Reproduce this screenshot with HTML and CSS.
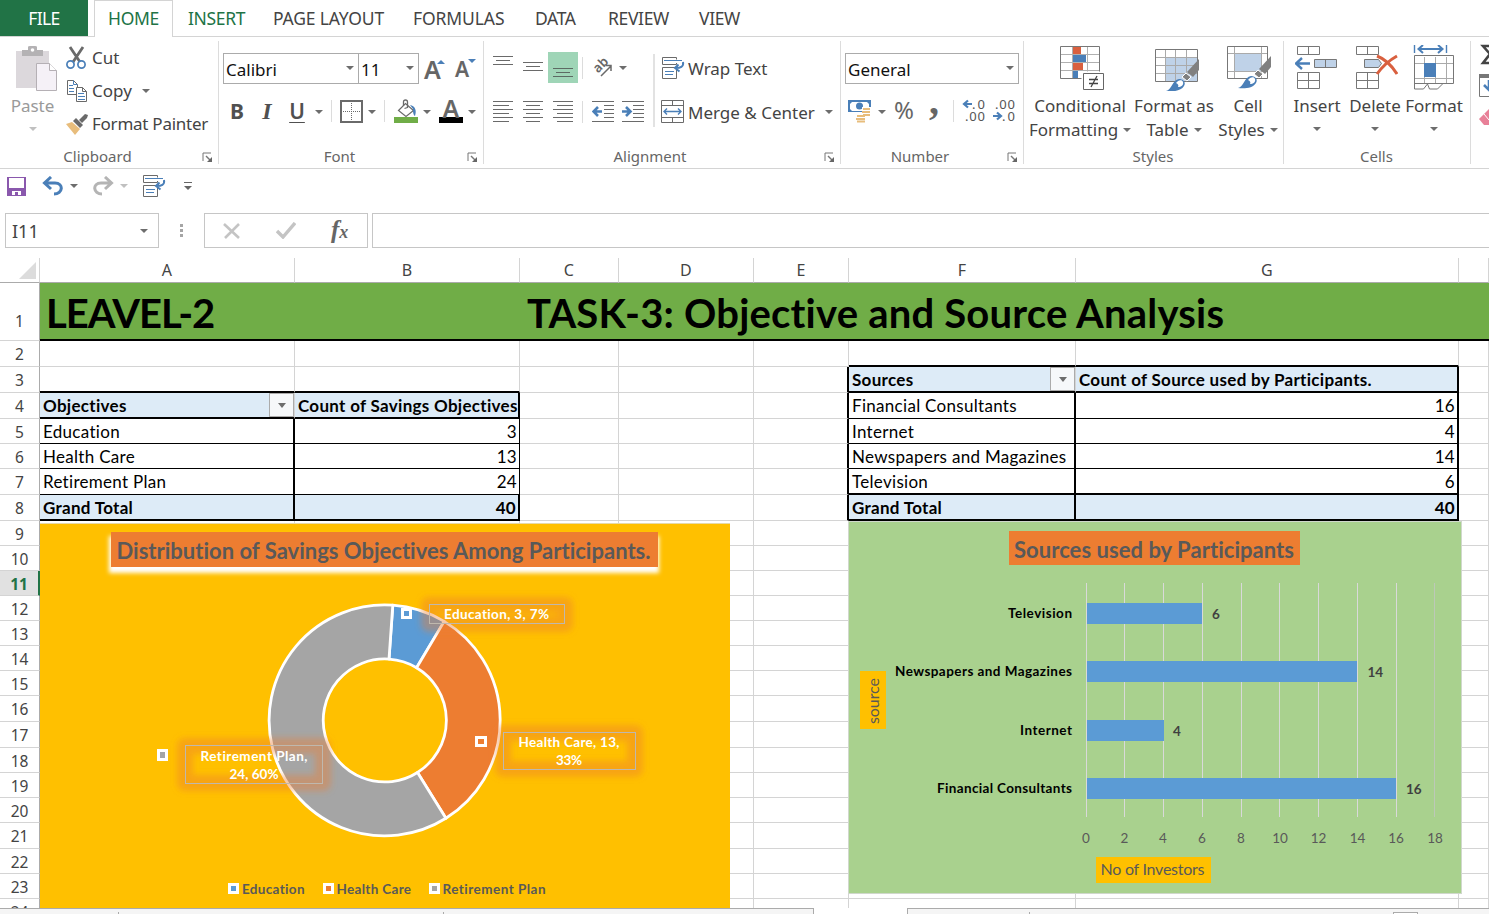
FILE: index.html
```html
<!DOCTYPE html>
<html lang="en">
<head>
<meta charset="utf-8">
<title>Objective and Source Analysis</title>
<link rel="stylesheet" href="styles.css">
</head>
<body>
<svg class="defs" width="0" height="0">
  <defs>
    <symbol id="launch" viewBox="0 0 11 11"><path d="M1 9V1h8" fill="none" stroke="#777"/><path d="M4 4l4 4" stroke="#777" stroke-width="1.4"/><path d="M10 5v5H5z" fill="#666"/></symbol>
    <symbol id="wrap" viewBox="0 0 24 24"><path d="M1.500 8.500v-7h14v2M15.500 7v1.500h-14M1.500 11.500h14v11h-14z" fill="none" stroke="#6a6a6a"/><path d="M3 4.500h18M4 15.500h9M4 18.500h8" stroke="#4a7fb8"/><path d="M22 6c1 5-3 6-7 6M17.500 8.500L14 12l4.500 3.500" fill="none" stroke="#4a7fb8" stroke-width="2"/></symbol>
    <symbol id="brush" viewBox="0 0 34 34"><path d="M33 1v11l-6 7-6-5z" fill="#808080"/><path d="M20 15l5 4-4 4-5-4z" fill="#808080" stroke="#fff"/><path d="M0 33c6-1 6-11 13-12 5 0 7 4 5 7-3 5-11 6-18 5z" fill="#4a7fb8"/><path d="M10 25c2-3 6-4 7-1s-2 5-5 5c1-2 0-3-2-4z" fill="#fff"/></symbol>
  </defs>
</svg>
<nav class="tabs">
  <span class="tab file">FILE</span><span class="tab home">HOME</span><span class="tab insert">INSERT</span><span class="tab layout">PAGE LAYOUT</span><span class="tab formulas">FORMULAS</span><span class="tab data">DATA</span><span class="tab review">REVIEW</span><span class="tab view">VIEW</span>
</nav>
<section class="ribbon">
  <div class="group clipboard">
    <div class="body">
      <div class="big paste">
        <svg width="42" height="46" viewBox="0 0 42 46"><path d="M0 5h33v37H0z" fill="#dcd8dc"/><path d="M6 10V4h6V1q0-1 2-1h5q2 0 2 1v3h6v6z" fill="#b4b2b4"/><circle cx="16.500" cy="4" r="1.800" fill="#fff"/><path d="M20.500 17.500h13l7 7v20h-20z" fill="#f5f1f7" stroke="#b5b0b5"/><path d="M33.500 17.500v7h7" fill="#fff" stroke="#b5b0b5"/></svg>
        <span>Paste</span><i class="arrow light"></i>
      </div>
      <div class="stack">
        <div class="cmd"><svg width="22" height="24" viewBox="0 0 22 24"><path d="M4 1l10 15M17 1L7 16" stroke="#6a6a6a" stroke-width="2.800"/><circle cx="4.500" cy="18.500" r="3.600" fill="#fff" stroke="#4a7fb8" stroke-width="1.700"/><circle cx="15.500" cy="18.500" r="3.600" fill="#fff" stroke="#4a7fb8" stroke-width="1.700"/></svg><span class="t-cut">Cut</span></div>
        <div class="cmd"><svg width="22" height="24" viewBox="0 0 22 24"><path d="M1.500 1.500h6l4 4v10h-10z" fill="#fff" stroke="#6a6a6a"/><path d="M7.500 1.500v4h4M3 6.500h4M3 9.500h5M3 12.500h5" fill="none" stroke="#4a7fb8"/><path d="M10.500 8.500h6l4 4v10h-10z" fill="#fff" stroke="#6a6a6a"/><path d="M16.500 8.500v4h4" fill="none" stroke="#6a6a6a"/><path d="M12 14.500h6M12 17.500h7M12 20.500h7" stroke="#4a7fb8"/></svg><span class="t-copy">Copy</span><i class="arrow"></i></div>
        <div class="cmd"><svg width="22" height="24" viewBox="0 0 22 24"><path d="M0 12l6-2 8 7-5 6z" fill="#e8bd7c"/><path d="M7 9l3-3 7 7-3 3z" fill="#6a6a6a"/><path d="M13 8l6-6 3 1-1 3-5 5z" fill="#6a6a6a"/></svg><span class="t-painter">Format Painter</span></div>
      </div>
    </div>
    <div class="caption"><span>Clipboard</span><svg width="11" height="11"><use href="#launch"/></svg></div>
  </div>
  <div class="group font">
    <div class="body rows">
      <div class="line">
        <div class="combo c-font"><span>Calibri</span><i class="arrow"></i></div><div class="combo c-size"><span>11</span><i class="arrow"></i></div>
        <span class="grow">A<svg width="8" height="5"><path d="M0 5l4-4 4 4z" fill="#4a7fb8"/></svg></span><span class="shrink">A<svg width="8" height="5"><path d="M0 0h8L4 4z" fill="#4a7fb8"/></svg></span>
      </div>
      <div class="line tools">
        <span class="w30 bold">B</span><span class="w30 italic">I</span><span class="w30 under">U</span><i class="arrow"></i><i class="sep"></i>
        <svg class="ic-border" width="23" height="23"><path d="M1 1h21v21H1z" fill="none" stroke="#6a6a6a" stroke-width="2"/><path d="M11.500 3v18M3 11.500h18" stroke="#6a6a6a" stroke-dasharray="1 1"/></svg><i class="arrow a2"></i><i class="sep"></i>
        <svg class="ic-fill" width="24" height="25" viewBox="0 0 24 25"><path d="M4.500 11.500l7-7 8 7-7.500 6z" fill="#fff" stroke="#6a6a6a" stroke-width="1.200"/><path d="M9.500 7V3q0-2 2-2t2 2v6M10.500 9.500l3-1" fill="none" stroke="#6a6a6a" stroke-width="1.300"/><path d="M16 6c5 1 7 5 5 11-2-1-2-5-2-7z" fill="#4a7fb8"/><path d="M0 18h24v6H0z" fill="#70ad47"/></svg><i class="arrow a2"></i>
        <span class="fontcolor">A</span><i class="arrow a2"></i>
      </div>
    </div>
    <div class="caption"><span>Font</span><svg width="11" height="11"><use href="#launch"/></svg></div>
  </div>
  <div class="group align">
    <div class="body">
      <div class="alignicons">
        <div class="line">
          <span class="btn"><svg width="30" height="31"><path d="M5 4.500h20M8 8.500h14M5 12.500h20" stroke="#6a6a6a"/></svg></span><span class="btn"><svg width="30" height="31"><path d="M5 10.500h20M8 14.500h14M5 18.500h20" stroke="#6a6a6a"/></svg></span><span class="btn on"><svg width="30" height="31"><path d="M5 16.500h20M8 20.500h14M5 24.500h20" stroke="#5d6a63"/></svg></span><i class="sep"></i>
          <svg class="ic-orient" width="22" height="22" viewBox="0 0 22 22"><text transform="translate(5 16.500) rotate(-45)" class="abtext">ab</text><path d="M8 19L18 9M12.500 8.500h5.500v5.500" fill="none" stroke="#6a6a6a" stroke-width="1.500"/></svg><i class="arrow a3"></i>
        </div>
        <div class="line second">
          <span class="btn"><svg width="30" height="24"><path d="M5 1.500h20M5 5.500h16M5 9.500h20M5 13.500h16M5 17.500h20M5 21.500h16" stroke="#6a6a6a"/></svg></span><span class="btn"><svg width="30" height="24"><path d="M5 1.500h20M8 5.500h14M5 9.500h20M8 13.500h14M5 17.500h20M8 21.500h14" stroke="#6a6a6a"/></svg></span><span class="btn"><svg width="30" height="24"><path d="M5 1.500h20M9 5.500h16M5 9.500h20M9 13.500h16M5 17.500h20M9 21.500h16" stroke="#6a6a6a"/></svg></span><i class="sep"></i>
          <svg class="ic-indent" width="22" height="24"><path d="M0 1.500h22M12 5.500h10M12 9.500h10M12 13.500h10M12 17.500h10M0 21.500h22" stroke="#6a6a6a"/><path d="M10 11.500H3M6 7l-4.500 4.500L6 16" fill="none" stroke="#4a7fb8" stroke-width="2.600"/></svg><svg class="ic-outdent" width="22" height="24"><path d="M0 1.500h22M11 5.500h11M11 9.500h11M11 13.500h11M11 17.500h11M0 21.500h22" stroke="#6a6a6a"/><path d="M0 11.500h7M4 7l4.500 4.500L4 16" fill="none" stroke="#4a7fb8" stroke-width="2.600"/></svg>
        </div>
      </div>
      <div class="alignwords">
        <div class="cmd"><svg width="24" height="24"><use href="#wrap"/></svg><span class="t-wrap">Wrap Text</span></div>
        <div class="cmd"><svg width="24" height="24"><path d="M.5 .5h22v22H.5zM.5 5.500h22M.5 17.500h22M11.500 .5v5M11.500 17.500v5" fill="none" stroke="#6a6a6a"/><path d="M3 11.500h17M6 8.500l-3 3 3 3M17 8.500l3 3-3 3" fill="none" stroke="#4a7fb8" stroke-width="1.400"/></svg><span class="t-merge">Merge &amp; Center</span><i class="arrow"></i></div>
      </div>
    </div>
    <div class="caption"><span>Alignment</span><svg width="11" height="11"><use href="#launch"/></svg></div>
  </div>
  <div class="group number">
    <div class="body rows">
      <div class="line"><div class="combo c-num"><span>General</span><i class="arrow"></i></div></div>
      <div class="line tools">
        <svg class="ic-money" width="24" height="24"><path d="M0 1h23v12H0z" fill="#4a7fb8"/><path d="M4 3h15l2 2v5l-2 2H4l-2-2V5z" fill="#fff"/><circle cx="11.500" cy="7" r="3.500" fill="#4a7fb8"/><path d="M14 8h10v11h-6v5H7v-9h7z" fill="#fff"/><path d="M15 10h7M14 13h8M15 16h7M9 17h8M8 20h9M9 22.500h8" stroke="#e8bd7c" stroke-width="2"/></svg><i class="arrow a2"></i>
        <span class="percent">%</span><span class="comma">,</span><i class="sep"></i>
        <svg class="ic-dec" width="54" height="26" viewBox="0 0 54 26"><path d="M10 6H3M6 2.500L2 6l4 3.500M31 18h7M35 14.500l4 3.500-4 3.500" fill="none" stroke="#4a7fb8" stroke-width="2.200"/><text class="dec" x="10" y="10.500" textLength="13">.0</text><text class="dec" x="3" y="22.500" textLength="20">.00</text><text class="dec" x="33" y="10.500" textLength="20">.00</text><text class="dec" x="40" y="22.500" textLength="13">.0</text></svg>
      </div>
    </div>
    <div class="caption"><span>Number</span><svg width="11" height="11"><use href="#launch"/></svg></div>
  </div>
  <div class="group styles">
    <div class="body">
      <div class="big"><svg class="i1" width="45" height="46"><path d="M.5 1.500h39v32H.5z" fill="#fff" stroke="#777"/><path d="M1 9.500h38M1 17.500h38M1 25.500h38M12.500 2v31M27.500 2v31" stroke="#b0b0b0"/><path d="M13 2h8v7h-8zM13 18h10v7H13z" fill="#d9603f"/><path d="M13 10h13v7H13zM13 26h5v7h-5z" fill="#4a7fb8"/><path d="M21.500 26.500h23v19h-23z" fill="#fff"/><path d="M23.500 28.500h20v16h-20z" fill="#fff" stroke="#666"/><path d="M29 34.500h9M29 38.500h9M37 31l-6 11" stroke="#444" stroke-width="1.300"/></svg><span class="t-cond">Conditional</span><span class="t-fmting">Formatting<i class="arrow"></i></span></div>
      <div class="big"><svg class="i2" width="46" height="46"><path d="M1.500 4.500h42v32h-42z" fill="#fff"/><path d="M12 13h31v24H12z" fill="#bfd2e8"/><path d="M2 12.500h41M2 20.500h41M2 28.500h41M11.500 5v31M21.500 5v31M32.500 5v31" stroke="#aaa"/><path d="M1.500 4.500h42v32h-42z" fill="none" stroke="#777"/><use href="#brush" x="12" y="13" width="34" height="34"/></svg><span class="t-fmtas">Format as</span><span class="t-table">Table<i class="arrow"></i></span></div>
      <div class="big"><svg class="i3" width="44" height="46"><path d="M.5 1.500h40v32H.5z" fill="#fff"/><path d="M8 9h26v18H8z" fill="#bfd2e8"/><path d="M1 8.500h39M1 26.500h39M7.500 2v31M34.500 2v31" stroke="#aaa"/><path d="M.5 1.500h40v32H.5z" fill="none" stroke="#777"/><use href="#brush" x="11" y="10" width="34" height="34"/></svg><span class="t-cell">Cell</span><span class="t-styles">Styles<i class="arrow"></i></span></div>
    </div>
    <div class="caption"><span>Styles</span></div>
  </div>
  <div class="group cells">
    <div class="body">
      <div class="big"><svg width="44" height="46"><path d="M2.500 1.500h22v8h-22zM13.500 1.500v8M2.500 27.500h22v16h-22zM2.500 35.500h22M13.500 27.500v16" fill="none" stroke="#777"/><path d="M19.500 14.500h22v8h-22z" fill="#bfd2e8" stroke="#777"/><path d="M30.500 14.500v8" stroke="#777"/><path d="M15 18.500H1M7 13l-6 5.500L7 24" fill="none" stroke="#4a7fb8" stroke-width="2.400"/></svg><span class="t-ins">Insert</span><i class="arrow"></i></div>
      <div class="big"><svg width="46" height="46"><path d="M4.500 1.500h22v8h-22zM15.500 1.500v8M4.500 27.500h22v16h-22zM4.500 35.500h22M15.500 27.500v16" fill="none" stroke="#777"/><path d="M12.500 14.500h14l3 4-3 4h-14z" fill="#bfd2e8" stroke="#777"/><path d="M25 11c8 3 15 10 20 18M45 11c-9 5-15 11-20 18" fill="none" stroke="#d9603f" stroke-width="3"/></svg><span class="t-del">Delete</span><i class="arrow"></i></div>
      <div class="big"><svg width="42" height="46"><path d="M1.500 11.500h39v28h-39z" fill="#fff"/><path d="M2 18.500h38M2 33.500h38M11.500 12v27M22.500 12v27M33.500 12v27" stroke="#aaa"/><path d="M1.500 10.500h39v28h-39zM1.500 38v6h9l4-5 2 5h8l5-5" fill="none" stroke="#777"/><path d="M11 18h12v14H11z" fill="#4a7fb8"/><path d="M1.500 0v8M33.500 0v8" stroke="#4a7fb8" stroke-width="1.400"/><path d="M6 4h23M10 0L5.500 4l4.500 4M25 0l4.500 4L25 8" fill="none" stroke="#4a7fb8" stroke-width="2"/></svg><span class="t-fmt">Format</span><i class="arrow"></i></div>
    </div>
    <div class="caption"><span>Cells</span></div>
  </div>
  <div class="group editing">
    <svg width="18" height="100"><path d="M24 9H12l7 8-7 9h12" fill="none" stroke="#444" stroke-width="2.600"/><path d="M8.500 38.500h15v21h-15z" fill="#fff" stroke="#777"/><path d="M8 37h16v4H8z" fill="#777"/><path d="M18 43v10M13 48l6 6" stroke="#4a7fb8" stroke-width="2.600"/><path d="M8 82l10-10v16h-5z" fill="#e88098"/><path d="M13 77l5 6" stroke="#fff"/></svg>
  </div>
</section>
<div class="quick">
  <svg width="19" height="19"><path d="M0 0h19v19H0z" fill="#8a58ad"/><path d="M2 1h15v10H2zM5 14h9v4h-3v-3H8v3H5z" fill="#fff"/></svg>
  <svg class="undo" width="22" height="20"><path d="M2 7h11c9 0 8 11-1 11M9 1L2.500 7 9 13" fill="none" stroke="#4a7fb8" stroke-width="3"/></svg><i class="arrow"></i>
  <svg class="redo" width="22" height="20"><path d="M20 7H9c-9 0-8 11 1 11M13 1l6.500 6L13 13" fill="none" stroke="#b4b4b4" stroke-width="3"/></svg><i class="arrow light"></i>
  <svg class="qwrap" width="24" height="24"><use href="#wrap"/></svg>
  <svg class="more" width="9" height="8"><path d="M0 .5h8" stroke="#666"/><path d="M0 4h8L4 8z" fill="#666"/></svg>
</div>
<div class="formula">
  <div class="namebox"><span>I11</span><i class="arrow"></i></div>
  <div class="dots"><i></i><i></i><i></i></div>
  <div class="fxbox"><svg width="18" height="16"><path d="M1 1l15 14M16 1L2 15" stroke="#c4c4c4" stroke-width="2.600"/></svg><svg width="20" height="17"><path d="M1 9l6 6L19 1" fill="none" stroke="#c4c4c4" stroke-width="3.400"/></svg><span class="fx">f<small>x</small></span></div>
  <div class="input"></div>
</div>
<main class="sheet">
  <div class="row head"><b><svg width="17" height="17"><path d="M17 0v17H0z" fill="#dcdcdc"/></svg></b><i>A</i><i>B</i><i>C</i><i>D</i><i>E</i><i>F</i><i>G</i><i></i></div>
  <div class="row r1"><b>1</b><i><span class="h1 left">LEAVEL-2</span></i><i></i><i><span class="h1 right">TASK-3: Objective and Source Analysis</span></i><i></i><i></i><i></i><i></i><i></i></div>
  <div class="row r26"><b>2</b><i></i><i></i><i></i><i></i><i></i><i class="k2"></i><i class="k2"></i><i></i></div>
  <div class="row r26"><b>3</b><i class="k2"></i><i class="k2"></i><i></i><i></i><i class="v2"></i><i class="th k2 filter"><span class="s-src">Sources</span><em><u class="arrow"></u></em></i><i class="th k2 v2"><span class="s-cs">Count of Source used by Participants.</span></i><i></i></div>
  <div class="row r26"><b>4</b><i class="th k2 filter"><span class="s-obj">Objectives</span><em><u class="arrow"></u></em></i><i class="th k2 v2"><span class="s-co">Count of Savings Objectives</span></i><i></i><i></i><i class="v2"></i><i class="k1 v2">Financial Consultants</i><i class="k1 v2 num">16</i><i></i></div>
  <div class="row r25"><b>5</b><i class="k1 v2">Education</i><i class="k1 v1 num">3</i><i></i><i></i><i class="v2"></i><i class="k1 v2">Internet</i><i class="k1 v2 num">4</i><i></i></div>
  <div class="row r25"><b>6</b><i class="k1 v2">Health Care</i><i class="k1 v1 num">13</i><i></i><i></i><i class="v2"></i><i class="k1 v2">Newspapers and Magazines</i><i class="k1 v2 num">14</i><i></i></div>
  <div class="row r26"><b>7</b><i class="k1 v2">Retirement Plan</i><i class="k1 v1 num">24</i><i></i><i></i><i class="v2"></i><i class="k2 v2">Television</i><i class="k2 v2 num">6</i><i></i></div>
  <div class="row r26"><b>8</b><i class="th k2 v2">Grand Total</i><i class="th k2 v2 num">40</i><i></i><i></i><i class="v2"></i><i class="th k2 v2">Grand Total</i><i class="th k2 v2 num">40</i><i></i></div>
  <div class="row r25"><b>9</b><i></i><i></i><i></i><i></i><i></i><i></i><i></i><i></i></div>
  <div class="row r25"><b>10</b><i></i><i></i><i></i><i></i><i></i><i></i><i></i><i></i></div>
  <div class="row r25 sel"><b>11</b><i></i><i></i><i></i><i></i><i></i><i></i><i></i><i></i></div>
  <div class="row r25"><b>12</b><i></i><i></i><i></i><i></i><i></i><i></i><i></i><i></i></div>
  <div class="row r25"><b>13</b><i></i><i></i><i></i><i></i><i></i><i></i><i></i><i></i></div>
  <div class="row r25"><b>14</b><i></i><i></i><i></i><i></i><i></i><i></i><i></i><i></i></div>
  <div class="row r25"><b>15</b><i></i><i></i><i></i><i></i><i></i><i></i><i></i><i></i></div>
  <div class="row r26"><b>16</b><i></i><i></i><i></i><i></i><i></i><i></i><i></i><i></i></div>
  <div class="row r26"><b>17</b><i></i><i></i><i></i><i></i><i></i><i></i><i></i><i></i></div>
  <div class="row r25"><b>18</b><i></i><i></i><i></i><i></i><i></i><i></i><i></i><i></i></div>
  <div class="row r25"><b>19</b><i></i><i></i><i></i><i></i><i></i><i></i><i></i><i></i></div>
  <div class="row r25"><b>20</b><i></i><i></i><i></i><i></i><i></i><i></i><i></i><i></i></div>
  <div class="row r26"><b>21</b><i></i><i></i><i></i><i></i><i></i><i></i><i></i><i></i></div>
  <div class="row r25"><b>22</b><i></i><i></i><i></i><i></i><i></i><i></i><i></i><i></i></div>
  <div class="row r25"><b>23</b><i></i><i></i><i></i><i></i><i></i><i></i><i></i><i></i></div>
  <div class="row r25"><b>24</b><i></i><i></i><i></i><i></i><i></i><i></i><i></i><i></i></div>

  <svg class="chart donut" width="691" height="385" viewBox="40 523 691 385">
    <defs>
      <filter id="soft" x="-30%" y="-100%" width="160%" height="300%"><feGaussianBlur stdDeviation="3"/></filter>
      <filter id="glow" x="-10%" y="-40%" width="120%" height="190%"><feGaussianBlur stdDeviation="2"/></filter>
    </defs>
    <rect x="40" y="524" width="690" height="384" fill="#ffc000"/><path d="M40 523.500h690" stroke="#e6d9a8"/>
    <rect x="109" y="536" width="550" height="37" fill="#fff" filter="url(#glow)"/>
    <rect x="111" y="532" width="547" height="35" fill="#ed7d31"/>
    <text class="ct" x="116.500" y="558.500" textLength="534">Distribution of Savings Objectives Among Participants.</text>
    <g stroke="#fff" stroke-width="2.800" stroke-linejoin="round">
      <path d="M392.800 605.200A115.500 115.500 0 0 1 444.200 621.400L416.600 667.700A61.500 61.500 0 0 0 389 659.100z" fill="#5b9bd5"/>
      <path d="M444.200 621.400A115.500 115.500 0 0 1 445.900 818.300L417.500 772.500A61.500 61.500 0 0 0 416.600 667.700z" fill="#ed7d31"/>
      <path d="M445.900 818.300A115.500 115.500 0 1 1 392.800 605.200L389 659.100A61.500 61.500 0 1 0 417.500 772.500z" fill="#a5a5a5"/>
    </g>
    <g fill="none" stroke="#ed7d31" stroke-opacity=".42" stroke-width="16" stroke-linejoin="round">
      <rect x="429" y="605" width="136" height="19" filter="url(#soft)"/><rect x="503" y="733" width="132" height="36" filter="url(#soft)"/><rect x="185" y="746" width="138" height="37" filter="url(#soft)"/>
    </g>
    <g fill="none" stroke="#bfb8ae"><rect x="429.500" y="604.500" width="135" height="19"/><rect x="503.500" y="732.500" width="132" height="37"/><rect x="185.500" y="745.500" width="137" height="38"/></g>
    <g class="dl">
      <text x="444" y="619" textLength="105">Education, 3, 7%</text>
      <text x="518.500" y="747" textLength="101">Health Care, 13,</text><text x="556" y="765" textLength="26">33%</text>
      <text x="200.500" y="761" textLength="107">Retirement Plan,</text><text x="229.500" y="779" textLength="49">24, 60%</text>
    </g>
    <g stroke="#fff" stroke-width="3"><rect x="402.500" y="609.500" width="8" height="8" fill="#5b9bd5"/><rect x="476.500" y="737.500" width="9" height="8" fill="#ed7d31"/><rect x="158.500" y="750.500" width="8" height="9" fill="#a5a5a5"/>
    <rect x="229.500" y="884.500" width="8" height="8" fill="#5b9bd5"/><rect x="324.500" y="884.500" width="8" height="8" fill="#ed7d31"/><rect x="430.500" y="884.500" width="8" height="8" fill="#a5a5a5"/></g>
    <g class="lg"><text x="242" y="894" textLength="62.500">Education</text><text x="336.500" y="894" textLength="74.500">Health Care</text><text x="442.500" y="894" textLength="103">Retirement Plan</text></g>
  </svg>

  <svg class="chart bars" width="614" height="373" viewBox="848 521 614 373">
    <rect x="848.500" y="521.500" width="613" height="372" fill="#a9d18e" stroke="#d0d8cc"/>
    <rect x="1009" y="531" width="291" height="34" fill="#ed7d31"/>
    <text class="ct" x="1014" y="557.500" textLength="280">Sources used by Participants</text>
    <path d="M1086.500 583v234M1124.500 583v234M1163.500 583v234M1202.500 583v234M1241.500 583v234M1279.500 583v234M1318.500 583v234M1357.500 583v234M1396.500 583v234" stroke="#d9d9d9"/><path d="M1434.500 583v234" stroke="#bdc8b8"/>
    <g fill="#5b9bd5"><path d="M1087 603h115v21h-115zM1087 661h270v21h-270zM1087 720h77v21h-77zM1087 778h309v21h-309z"/></g>
    <g class="cat"><text x="1008" y="618" textLength="64">Television</text><text x="895" y="676" textLength="177">Newspapers and Magazines</text><text x="1020" y="735" textLength="52">Internet</text><text x="937" y="793" textLength="135">Financial Consultants</text></g>
    <g class="val"><text x="1212" y="619">6</text><text x="1367.500" y="677">14</text><text x="1173" y="736">4</text><text x="1406" y="794">16</text></g>
    <g class="ax"><text x="1086" y="843">0</text><text x="1124.500" y="843">2</text><text x="1163" y="843">4</text><text x="1202" y="843">6</text><text x="1241" y="843">8</text><text x="1280" y="843">10</text><text x="1318.500" y="843">12</text><text x="1357.500" y="843">14</text><text x="1396" y="843">16</text><text x="1435" y="843">18</text></g>
    <rect x="860" y="671" width="26" height="58" fill="#ffc000"/><text class="at" transform="translate(878.500 724) rotate(-90)" textLength="46">source</text>
    <rect x="1096" y="857" width="115" height="26" fill="#ffc000"/><text class="at" x="1100.500" y="875" textLength="104">No of Investors</text>
  </svg>
</main>
<footer class="bottom"><div class="pane p1"><i></i><i></i></div><div class="pane p2"><i></i><u></u></div></footer>
</body>
</html>
```
FILE: styles.css
```css
* { box-sizing: border-box; }
body { margin: 0; width: 1489px; height: 914px; overflow: hidden; background: #fff; color: #444; font-family: "Noto Sans", sans-serif; font-size: 17px; font-variant-ligatures: none; display: flex; flex-direction: column; }
i, em, u { font-style: normal; text-decoration: none; }
svg { display: block; flex: none; }
.defs { position: absolute; }
.arrow { width: 0; height: 0; flex: none; border: solid transparent; border-width: 4px 4px 0; border-top-color: #6d6d6d; display: inline-block; }
.arrow.light { border-top-color: #c0c0c0; }

.tabs { height: 37px; flex: none; display: flex; border-bottom: 1px solid #d4d4d4; line-height: 37px; white-space: nowrap; font-size: 17.5px; }
.tab { letter-spacing: -.35px; }
.file { width: 88px; background: #217346; color: #fff; text-align: center; letter-spacing: -.6px; }
.home { width: 79px; height: 37px; line-height: 35px; margin-left: 6px; border: 1px solid #d4d4d4; border-bottom: 0; background: #fff; color: #217346; text-align: center; }
.insert { color: #217346; width: 85px; padding-left: 15px; }
.layout { width: 140px; padding-left: 15px; letter-spacing: -.15px; }
.formulas { width: 122px; padding-left: 15px; letter-spacing: -.1px; }
.data { width: 73px; padding-left: 15px; }
.review { width: 91px; padding-left: 15px; }
.view { padding-left: 15px; }

.ribbon { height: 132px; flex: none; display: flex; border-bottom: 1px solid #d4d4d4; }
.group { display: flex; flex-direction: column; position: relative; flex: none; white-space: nowrap; }
.group::after { content: ""; position: absolute; right: 0; top: 4px; height: 123px; border-right: 1px solid #dcdcdc; }
.clipboard { width: 219px; } .font { width: 265px; } .align { width: 357px; } .number { width: 183px; } .styles { width: 260px; } .cells { width: 187px; } .editing { width: 18px; overflow: hidden; }
.editing::after { display: none; }
.body { height: 108px; display: flex; }
.body.rows { flex-direction: column; }
.caption { height: 22px; display: flex; align-items: center; justify-content: center; position: relative; font-size: 15px; color: #666; padding-right: 2px; }
.caption svg { position: absolute; right: 6px; top: 7px; }
.clipboard .caption { padding-right: 24px; }
.font .caption { padding-right: 24px; }
.align .caption { padding-right: 25px; }
.number .caption { padding-right: 25px; }
.big { display: flex; flex-direction: column; align-items: center; padding-top: 8px; line-height: 24px; }
.big svg { margin-bottom: 3px; }
.i1 { margin-left: 4px; } .i2 { margin-left: 5px; } .i3 { margin-left: 2px; }
.big > .arrow { margin-top: 9px; }
.big span .arrow { margin-left: 5px; vertical-align: 4px; }
.paste { width: 66px; color: #9a9a9a; padding-top: 9px; }
.paste svg { margin: 0 0 2px 7px; }
.paste .arrow, .paste span { margin-left: -1px; }
.stack { padding-top: 4px; }
.cmd { display: flex; align-items: center; height: 33px; }
.stack svg { margin-right: 4px; }
.cmd .arrow { margin-left: 10px; }
.t-painter { letter-spacing: -.25px; }

.line { display: flex; align-items: center; }
.font .line:first-child, .number .line:first-child { padding: 16px 0 0 4px; height: 47px; }
.combo { height: 31px; border: 1px solid #ababab; display: flex; align-items: center; justify-content: space-between; padding: 1px 4px 0 2px; color: #111; }
.combo .arrow { margin-bottom: 3px; }
.c-font { width: 136px; } .c-size { width: 61px; margin-left: -1px; } .c-num { width: 174px; }
.grow, .shrink { position: relative; font-weight: 600; color: #666; }
.grow { font-size: 25px; margin-left: 5px; width: 31px; line-height: 30px; }
.shrink { font-size: 21px; line-height: 29px; padding-top: 2px; }
.grow svg { position: absolute; left: 13px; top: 5px; }
.shrink svg { position: absolute; left: 13px; top: 6px; }
.tools { height: 28px; margin-top: 13px; }
.font .tools { padding-left: 3px; }
.w30 { width: 30px; text-align: center; font-size: 21px; font-weight: 700; color: #505050; line-height: 26px; margin-top: -1px; }
.italic { font-family: "Liberation Serif", serif; font-style: italic; font-size: 24px; }
.under { font-weight: 600; text-decoration: underline; text-decoration-thickness: 1px; text-underline-offset: 3px; }
.tools .arrow { margin: 2px 0 0 3px; }
.sep { width: 1px; height: 22px; background: #dcdcdc; flex: none; }
.font .sep { margin-left: 8px; }
.ic-border { margin-left: 8px; }
.tools .a2 { margin-left: 6px; }
.font .tools .a2 { margin-left: 5px; }
.ic-fill { margin-left: 9px; }
.fontcolor { margin-left: 8px; width: 24px; height: 24px; border-bottom: 6px solid #000; line-height: 18px; font-size: 25px; font-weight: 600; text-align: center; color: #666; }

.alignicons { width: 169px; padding-top: 15px; padding-left: 4px; }
.btn { width: 30px; }
.on { background: #9fd5b7; }
.alignicons .sep { margin-left: 4px; }
.ic-orient { margin-left: 10px; overflow: visible; }
.abtext { font-size: 13px; fill: #666; font-weight: 600; }
.a3 { margin-left: 4px; }
.second { margin-top: 17px; }
.ic-indent { margin-left: 9px; }
.ic-outdent { margin-left: 8px; }
.alignwords { border-left: 2px solid #e2e2e2; height: 73px; margin-top: 17px; padding-left: 7px; }
.alignwords .cmd { height: 28px; }
.alignwords .cmd + .cmd { margin-top: 16px; }
.alignwords svg { margin: 0 2px 0 -1px; }
.alignwords .cmd span { padding-left: 1px; }

.number .tools { padding-left: 7px; }
.percent { font-size: 24px; line-height: 28px; color: #666; width: 20px; margin: -2px 0 0 8px; }
.comma { font: 700 40px/20px "Liberation Serif", serif; color: #666; margin: -20px 0 0 15px; width: 12px; }
.number .sep { margin-left: 12px; }
.ic-dec { margin-left: 8px; overflow: visible; }
.dec { font-size: 13px; fill: #555; }
.styles .body { display: grid; grid-template-columns: 100px 88px 60px; padding-left: 6px; }
.cells .body { display: grid; grid-template-columns: 58px 58px 60px; padding-left: 4px; }

.quick { height: 37px; flex: none; display: flex; align-items: center; padding: 0 0 3px 7px; }
.undo { margin-left: 16px; } .quick .arrow { margin-left: 6px; } .redo { margin-left: 14px; } .qwrap { margin-left: 14px; } .more { margin-left: 18px; }

.formula { height: 52px; flex: none; display: flex; padding: 7px 0 10px 5px; }
.namebox { width: 154px; border: 1px solid #c6c6c6; display: flex; justify-content: space-between; align-items: center; padding: 0 10px 0 6px; font-size: 18px; }
.dots { width: 45px; display: flex; flex-direction: column; gap: 2px; align-items: center; justify-content: center; }
.dots i { width: 3px; height: 3px; background: #a5a5a5; }
.fxbox { width: 164px; border: 1px solid #c6c6c6; display: flex; align-items: center; padding-left: 18px; gap: 35px; }
.fx { font: italic 700 25px/30px "Liberation Serif", serif; color: #666; }
.fx small { font-size: 18px; }
.input { flex: 1; margin-left: 4px; border: 1px solid #c6c6c6; border-right: 0; }

.sheet { position: relative; height: 650px; overflow: hidden; flex: none; }
.row { display: grid; grid-template-columns: 40px 255px 225px 99px 135px 95px 227px 383px 30px; grid-template-rows: 100%; font: 17px "Lato", sans-serif; font-variant-ligatures: none; letter-spacing: .3px; color: #000; }
.row > i { border-right: 1px solid #d4d4d4; border-bottom: 1px solid #d4d4d4; padding-left: 3px; white-space: nowrap; line-height: 26px; min-width: 0; }
.row > b { border-right: 1px solid #ababab; border-bottom: 1px solid #d4d4d4; font: 15.5px/27px "Noto Sans", sans-serif; letter-spacing: 0; color: #444; text-align: center; }
.head { height: 25px; }
.row.head > b { display: flex; align-items: flex-end; justify-content: flex-end; padding: 0 3px 3px 0; border-right-color: #d4d4d4; border-bottom-color: #ababab; }
.row.head > i { text-align: center; font: 16px/24px "Noto Sans", sans-serif; color: #444; border-bottom-color: #ababab; padding: 0; }
.r1 { height: 58px; } .r25 { height: 25px; } .r26 { height: 26px; }
.row.r1 > i { background: #70ad47; border-right: 0; border-bottom: 2px solid #000; }
.row.r1 > b { line-height: 76px; }
.h1 { font: 700 40px/60px "Lato", sans-serif; font-variant-ligatures: none; position: relative; z-index: 1; display: inline-block; white-space: nowrap; }
.h1.left { letter-spacing: -1px; padding-left: 3px; } .h1.right { letter-spacing: .2px; padding-left: 4px; }
.row > .k1 { border-bottom: 1px solid #000; } .row > .k2 { border-bottom: 2px solid #000; }
.row > .v1 { border-right: 1px solid #000; } .row > .v2 { border-right: 2px solid #000; }
.row > .th { background: #ddebf7; font-weight: 700; }
.row > .num { text-align: right; padding-right: 2px; }
.row > .filter { display: flex; justify-content: space-between; }
.filter em { width: 25px; border: 1px solid #ababab; background: #f6f8fa; display: flex; align-items: center; justify-content: center; }
.filter .arrow { border-width: 5px 4.5px 0; }
.row.sel > b { background: #e1e1e1; color: #217346; font-weight: 700; border-right: 2px solid #217346; }

.chart { position: absolute; font-family: "Lato", sans-serif; font-weight: 700; }
.donut { left: 40px; top: 265px; } .bars { left: 848px; top: 263px; }
.ct { font-size: 22px; fill: #595959; }
.dl { font-size: 13.5px; fill: #fff; } .lg { font-size: 13.5px; fill: #595959; } .cat { font-size: 13.5px; fill: #000; } .val { font-size: 13.5px; fill: #404040; }
.ax { font-size: 13.5px; font-weight: 400; fill: #595959; text-anchor: middle; }
.at { font-size: 16px; font-weight: 400; fill: #595959; }

.bottom { height: 6px; display: flex; gap: 93px; }
.pane { border-top: 1px solid #ababab; border-right: 1px solid #ababab; background: #f5f5f5; display: flex; }
.p1 { width: 814px; } .p2 { flex: 1; border-left: 1px solid #ababab; border-right: 0; }
.pane i { border-right: 1px solid #ababab; margin-top: 3px; }
.p1 i { width: 119px; } .p1 i + i { width: 325px; } .p2 i { width: 122px; }
.p2 u { margin: 3px 0 0 363px; width: 25px; border: 1px solid #ababab; background: #fff; border-bottom: 0; }
```
